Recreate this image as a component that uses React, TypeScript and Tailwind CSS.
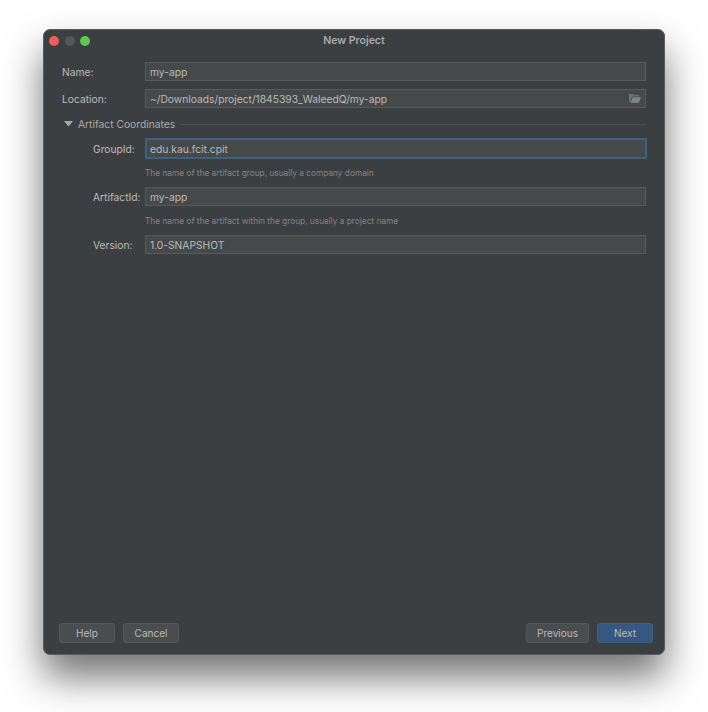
import React from "react";

const Field = ({ value, focused, children }: any) => (
	<div
		className={
			focused
				? "flex-1 h-[21px] -mr-px flex items-center justify-between pl-[3px] pr-2 bg-[#45494a] border-2 border-[#3d6185] rounded-[1px]"
				: "flex-1 h-[19px] flex items-center justify-between pl-[4px] pr-[4px] bg-[#45494a] border border-[#565a5b]"
		}
	>
		<span className="pt-[2px] leading-[13px] text-[#bbbbbb] text-[10.25px] whitespace-nowrap">{value}</span>
		{children}
	</div>
);

const Row = ({ label, labelClass, value, focused, children, className }: any) => (
	<div className={`flex items-center ${className}`}>
		<div className={`w-[83px] shrink-0 pt-[2px] leading-[13px] text-[#bbbbbb] text-[10.25px] whitespace-nowrap ${labelClass}`}>{label}</div>
		<Field value={value} focused={focused}>
			{children}
		</Field>
	</div>
);

const Button = ({ label, primary, className }: any) => (
	<button
		className={
			primary
				? `h-5 rounded-[3px] border border-[#3d6185] bg-[#365880] text-[#bbbbbb] text-[10px] ${className}`
				: `h-5 rounded-[3px] border border-[#54585a] bg-[#494d4f] text-[#bbbbbb] text-[10px] ${className}`
		}
	>
		{label}
	</button>
);

export default function App() {
	return (
		<div className="w-[708px] h-[712px] bg-white pl-[43px] pt-[29px] font-['Inter','Liberation_Sans',sans-serif] overflow-hidden">
			<div className="w-[622px] h-[626px] flex flex-col bg-[#3c3f41] rounded-[7px] border border-[#5a5d5f] shadow-[0_22px_38px_rgba(0,0,0,0.55)]">
				{/* Title bar */}
				<div className="relative h-[21px] shrink-0 flex items-center pl-[5px] gap-[5.5px]">
					<div className="w-[10px] h-[10px] rounded-full bg-[#ee5f57]" />
					<div className="w-[10px] h-[10px] rounded-full bg-[#53575a]" />
					<div className="w-[10px] h-[10px] rounded-full bg-[#5cc84e]" />
					<div className="absolute inset-0 flex items-center justify-center text-[#a9abac] text-[10.5px] font-semibold">
						New Project
					</div>
				</div>

				{/* Form */}
				<div className="flex-1 flex flex-col pl-[18px] pr-[18px] pt-[11px]">
					<Row label="Name:" value="my-app" />
					<Row label="Location:" value="~/Downloads/project/1845393_WaleedQ/my-app" className="mt-[8px]">
						<svg width="12" height="9" viewBox="0 0 12 9" className="shrink-0">
							<path d="M0 0h4l1 1h5v1.5H3L1 8H0z" fill="#6b7274" />
							<path d="M3.5 3.2H12L10 8.8H1.5z" fill="#7d8689" />
						</svg>
					</Row>

					<div className="flex items-center mt-[7px] h-[18px]">
						<svg width="9" height="6" viewBox="0 0 9 6" className="ml-[2px] shrink-0">
							<path d="M0 0h9L4.5 5.5z" fill="#a5a8a9" />
						</svg>
						<span className="ml-[5px] leading-[13px] text-[#a9abac] text-[10.25px] whitespace-nowrap">Artifact Coordinates</span>
						<div className="flex-1 ml-[5px] h-px bg-[#4a4d4f]" />
					</div>

					<Row label="GroupId:" labelClass="pl-[31px]" value="edu.kau.fcit.cpit" focused className="mt-[5px]" />
					<div className="pl-[83px] mt-[8px] text-[#818485] text-[8.3px] h-[12px] leading-[12px]">
						The name of the artifact group, usually a company domain
					</div>
					<Row label="ArtifactId:" labelClass="pl-[31px]" value="my-app" className="mt-[8px]" />
					<div className="pl-[83px] mt-[9px] text-[#818485] text-[8.3px] h-[12px] leading-[12px]">
						The name of the artifact within the group, usually a project name
					</div>
					<Row label="Version:" labelClass="pl-[31px]" value="1.0-SNAPSHOT" className="mt-[8px]" />
				</div>

				{/* Footer */}
				<div className="flex items-center pl-[15px] pr-[11px] pb-[11px]">
					<Button label="Help" className="w-[56px]" />
					<Button label="Cancel" className="w-[56px] ml-2" />
					<div className="flex-1" />
					<Button label="Previous" className="w-[63px]" />
					<Button label="Next" primary className="w-[56px] ml-2" />
				</div>
			</div>
		</div>
	);
}
